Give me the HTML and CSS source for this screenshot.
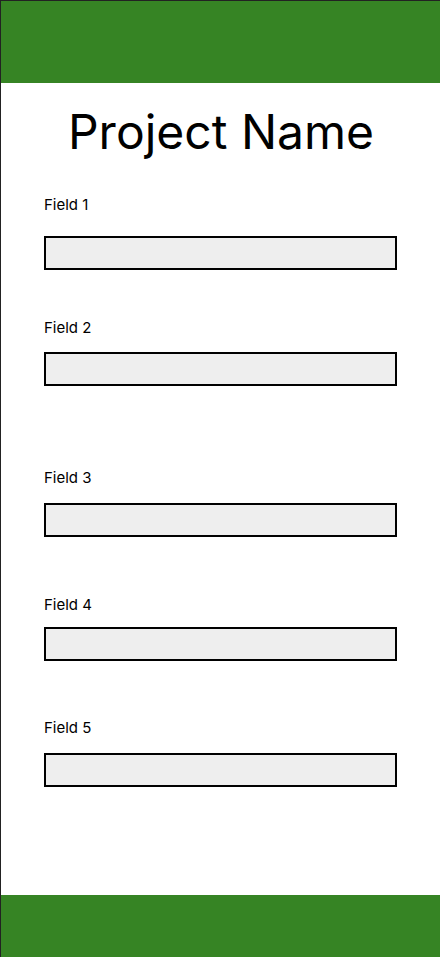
FILE: index.html
```html
<!DOCTYPE html>
<html lang="en">
<head>
<meta charset="utf-8">
<title>Project Name</title>
<link rel="stylesheet" href="styles.css">
</head>
<body>
<div class="frame">
  <header class="topbar"></header>
  <main class="content">
    <h1 class="title">Project Name</h1>
    <div class="field f1">
      <label class="label">Field 1</label>
      <div class="input"></div>
    </div>
    <div class="field f2">
      <label class="label">Field 2</label>
      <div class="input"></div>
    </div>
    <div class="field f3">
      <label class="label">Field 3</label>
      <div class="input"></div>
    </div>
    <div class="field f4">
      <label class="label">Field 4</label>
      <div class="input"></div>
    </div>
    <div class="field f5">
      <label class="label">Field 5</label>
      <div class="input"></div>
    </div>
  </main>
  <footer class="bottombar"></footer>
</div>
</body>
</html>
```
FILE: styles.css
```css
* { box-sizing: border-box; }
html, body { margin: 0; padding: 0; }
body {
  font-family: Inter, "Noto Sans", sans-serif;
  color: #000;
  background: #fff;
}
.frame {
  height: 957px;
  display: flex;
  flex-direction: column;
  border-top: 1px solid #222;
  border-left: 1px solid #222;
}
.topbar {
  height: 82px;
  background: #368424;
  flex: none;
}
.content {
  flex: 1;
  padding: 0 42px 0 43px;
}
.title {
  margin: 20px 0 0;
  font-size: 48px;
  font-weight: 400;
  line-height: 58px;
  text-align: center;
}
.field { display: flex; flex-direction: column; }
.label {
  font-size: 15px;
  line-height: 18px;
  display: block;
}
.input {
  height: 34px;
  width: 353px;
  border: 2px solid #000;
  background: #eeeeee;
}
.f1 { margin-top: 35px; }
.f1 .input { margin-top: 22px; }
.f2 { margin-top: 49px; }
.f2 .input { margin-top: 15px; }
.f3 { margin-top: 83px; }
.f3 .input { margin-top: 16px; }
.f4 { margin-top: 59px; }
.f4 .input { margin-top: 13px; }
.f5 { margin-top: 58px; }
.f5 .input { margin-top: 16px; }
.bottombar {
  height: 62px;
  background: #368424;
  flex: none;
}
```
